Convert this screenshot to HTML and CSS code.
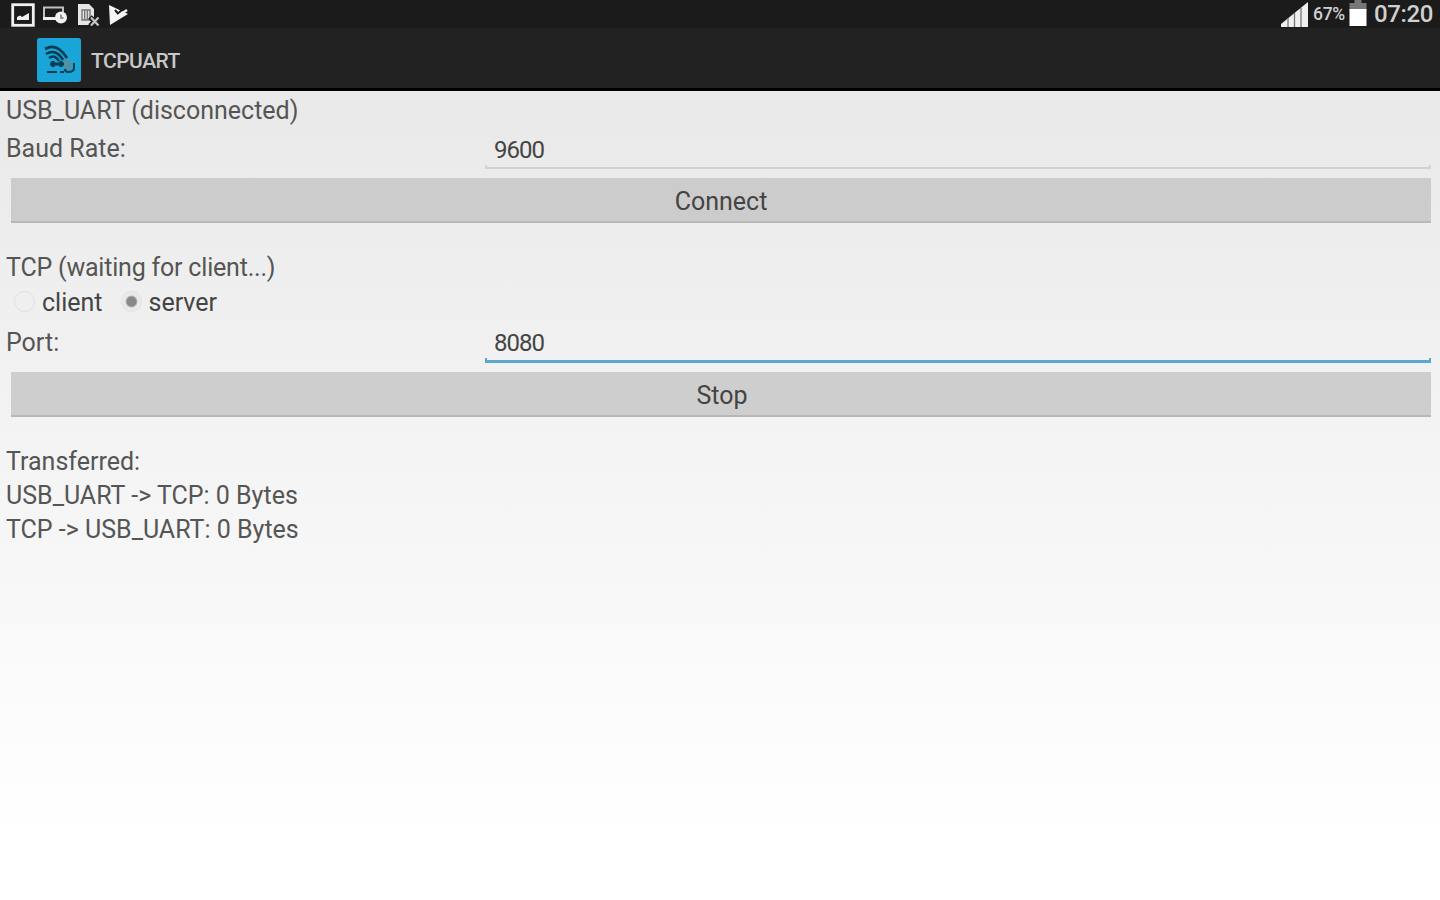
FILE: index.html
```html
<!doctype html>
<html lang="en">
<head>
    <meta charset="utf-8">
    <title>TCPUART</title>
    <link rel="stylesheet" href="styles.css">
</head>

<body>
<div class="statusbar">
    <div class="notifications">
        <svg class="ico-picture" width="24" height="24" viewBox="0 0 24 24">
            <rect x="1.7" y="1.7" width="20.6" height="20.6" fill="none" stroke="#f0f0f0" stroke-width="2.8"/>
            <path d="M6 17V14L9 12.5L11 14L18 10V17Z" fill="#f0f0f0"/>
        </svg>
        <svg class="ico-cast" width="26" height="22" viewBox="0 0 26 22">
            <path d="M21 7V2.5H2V13.5H14" fill="none" stroke="#c0c0c0" stroke-width="2"/>
            <path d="M1 13.5H14" stroke="#eee" stroke-width="3"/>
            <circle cx="19" cy="12.5" r="6" fill="#f2f2f2"/>
            <path d="M19 9.5V13H21.5" fill="none" stroke="#777" stroke-width="1.5"/>
        </svg>
        <svg class="ico-sim" width="24" height="24" viewBox="0 0 24 24">
            <path d="M1 1H12L17 6V13L14 22H1Z" fill="#e6e6e6"/>
            <path d="M5 7H13V17H5ZM7.7 7V17M10.4 7V17" fill="none" stroke="#777" stroke-width="1.4"/>
            <path d="M13 14L22 23M22 14L13 23" stroke="#1c1c1c" stroke-width="5"/>
            <path d="M14 14.5L21.5 22.5M21.5 14.5L14 22.5" stroke="#c4c4c4" stroke-width="2.2"/>
        </svg>
        <svg class="ico-play" width="22" height="22" viewBox="0 0 22 22">
            <path d="M1 1L20 10L2 21Z" fill="#f5f5f5"/>
            <path d="M7 6L10 9.5L17 3" fill="none" stroke="#1c1c1c" stroke-width="2"/>
            <path d="M10 12L19 6" fill="none" stroke="#f5f5f5" stroke-width="2.5"/>
        </svg>
    </div>
    <div class="system">
        <svg class="ico-signal" width="28" height="25" viewBox="0 0 28 25">
            <path d="M0 25V22L27 0V25Z" fill="#f0f0f0"/>
            <path d="M7 16V25M13.5 11V25M20 6V25" stroke="#777" stroke-width="1.3"/>
        </svg>
        <span class="percent">67%</span>
        <svg class="ico-battery" width="18" height="26" viewBox="0 0 18 26">
            <rect x="5.5" y="0" width="7" height="4" fill="#777"/>
            <rect x="0.5" y="3" width="17" height="8" fill="#777"/>
            <rect x="0.5" y="9" width="17" height="17" fill="#fff"/>
        </svg>
        <span class="clock">07:20</span>
    </div>
</div>

<div class="actionbar">
    <svg class="logo" width="44" height="44" viewBox="0 0 44 44">
        <rect width="44" height="44" rx="2.5" fill="#19a5d8"/>
        <g fill="none" stroke="#0b3c50">
            <path d="M8 11Q20 4 30 20" stroke-width="2.8"/>
            <path d="M9 16Q19 10 26 22" stroke-width="2.6"/>
            <path d="M12 20Q18 16 22 23" stroke-width="2.4"/>
            <path d="M13 26H27M16 23V29M24 23V29" stroke-width="3.2"/>
            <path d="M10 34H20M23 34H27" stroke-width="2"/>
            <path d="M28 28V31Q28 34 31 34Q37 34 37 30V25" stroke-width="2"/>
        </g>
        <rect x="27" y="22" width="7" height="9" fill="#5590a0"/>
    </svg>
    <span class="title">TCPUART</span>
</div>

<div class="content">
    <div class="label">USB_UART (disconnected)</div>
    <div class="row">
        <div class="label name">Baud Rate:</div>
        <div class="field">9600</div>
    </div>
    <div class="button">Connect</div>

    <div class="label section tcp">TCP (waiting for client...)</div>
    <div class="radios">
        <span class="radio"></span><span class="option client">client</span>
        <span class="radio checked"></span><span class="option">server</span>
    </div>
    <div class="row port">
        <div class="label name">Port:</div>
        <div class="field focused">8080</div>
    </div>
    <div class="button stop">Stop</div>

    <div class="label section">Transferred:</div>
    <div class="label">USB_UART -&gt; TCP: 0 Bytes</div>
    <div class="label">TCP -&gt; USB_UART: 0 Bytes</div>
</div>
</body>
</html>
```
FILE: styles.css
```css
* {
    box-sizing: border-box;
}

body {
    margin: 0;
    height: 900px;
    overflow: hidden;
    display: flex;
    flex-direction: column;
    font-family: Roboto, sans-serif;
    font-size: 25px;
    color: #555;
    background: #fff;
}

.statusbar {
    height: 28px;
    flex: none;
    display: flex;
    justify-content: space-between;
    background: #1b1b1b;
    color: #d0d0d0;
}

.notifications, .system {
    display: flex;
    align-items: flex-start;
}

.notifications {
    padding: 3px 0 0 11px;
}

.ico-cast {
    margin: 2px 0 0 7px;
}

.ico-sim {
    margin-left: 9px;
}

.ico-play {
    margin: 1px 0 0 7px;
}

.system {
    padding-right: 8px;
}

.ico-signal {
    margin-top: 2px;
}

.percent {
    width: 36px;
    margin: 0 0 0 4px;
    font-size: 17.5px;
    font-weight: 500;
    letter-spacing: -0.3px;
    line-height: 29px;
}

.ico-battery {
    margin: 0 7px 0 0;
}

.clock {
    width: 58px;
    font-size: 24px;
    font-weight: 500;
    letter-spacing: -0.4px;
    line-height: 28px;
}

.actionbar {
    height: 63px;
    flex: none;
    display: flex;
    align-items: center;
    padding-left: 37px;
    background: #222;
    border-bottom: 3px solid #000;
}

.logo {
    margin-top: 3px;
}

.title {
    margin: 5px 0 0 10px;
    font-size: 21px;
    font-weight: 500;
    letter-spacing: -0.5px;
    color: #c8c8c8;
}

.content {
    flex: 1;
    padding: 3px 6px 0;
    background: linear-gradient(#e9e9e9, #f4f4f4 45%, #fff 92%);
}

.label {
    line-height: 34px;
}

.row {
    display: flex;
    height: 43px;
    margin-top: 4px;
}

.name {
    width: 479px;
}

.field {
    position: relative;
    flex: 1;
    height: 37px;
    margin-right: 3px;
    padding-left: 9px;
    font-size: 24px;
    letter-spacing: -1px;
    line-height: 37px;
    color: #444;
    border-bottom: 2px solid #d2d2d2;
}

/* short upturned ends of the underline */
.field::before, .field::after {
    content: "";
    position: absolute;
    bottom: 0;
    width: 2px;
    height: 2px;
    background: #d2d2d2;
}

.field::before {
    left: 0;
}

.field::after {
    right: 0;
}

.focused {
    line-height: 35px;
    border-bottom: 3px solid #5aa7cf;
}

.focused::before, .focused::after {
    background: #5aa7cf;
}

.button {
    height: 45px;
    margin: 3px 3px 0 5px;
    line-height: 47px;
    text-align: center;
    color: #444;
    background: #ccc;
    border-bottom: 2px solid #b8b8b8;
}

.stop {
    padding-left: 2px;
    background: #cecece;
}

.section {
    margin-top: 28px;
}

.tcp {
    letter-spacing: -0.2px;
}

.radios {
    display: flex;
    align-items: center;
    height: 34px;
    padding-left: 8px;
    color: #444;
}

.radio {
    width: 21px;
    height: 21px;
    margin-top: -2px;
    border: 1px solid #e0e0e0;
    border-radius: 50%;
}

.checked {
    background: radial-gradient(circle, #888 0 4.5px, #bbb 5.5px, #eaeaea 6.5px);
}

.option {
    margin-left: 7px;
}

.client {
    margin-right: 18px;
}

.port {
    margin-top: 7px;
}
```
